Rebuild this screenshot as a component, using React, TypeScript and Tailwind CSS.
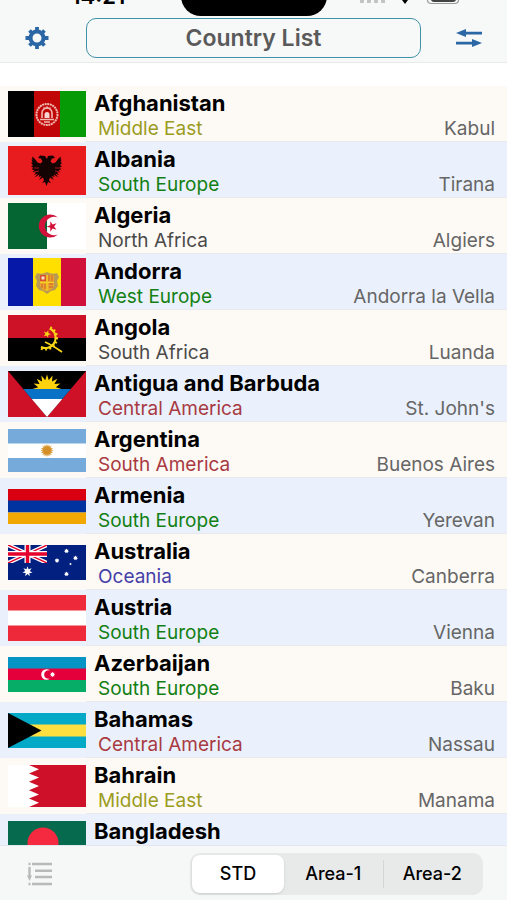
import { useState } from "react";
import type { ReactNode } from "react";

type Region =
    | "Middle East"
    | "South Europe"
    | "North Africa"
    | "West Europe"
    | "South Africa"
    | "Central America"
    | "South America"
    | "Oceania"
    | "South Asia";

interface Country {
    name: string;
    region: Region;
    capital: string;
    flagHeight: number;
    flag: ReactNode;
}

const regionColors: Record<Region, string> = {
    "Middle East": "text-[#9c9c1e]",
    "South Europe": "text-[#138013]",
    "North Africa": "text-[#4a4a4a]",
    "West Europe": "text-[#138013]",
    "South Africa": "text-[#4a4a4a]",
    "Central America": "text-[#a83a42]",
    "South America": "text-[#a83a42]",
    "Oceania": "text-[#4540a8]",
    "South Asia": "text-[#9c9c1e]",
};

const star = (cx: number, cy: number, outer: number, inner: number, points: number, turn = -90) =>
    Array.from({ length: points * 2 }, (_, i) => {
        const r = i % 2 === 0 ? outer : inner;
        const a = ((turn + (i * 180) / points) * Math.PI) / 180;
        return `${(cx + r * Math.cos(a)).toFixed(2)},${(cy + r * Math.sin(a)).toFixed(2)}`;
    }).join(" ");

const countries: Country[] = [
    {
        name: "Afghanistan",
        region: "Middle East",
        capital: "Kabul",
        flagHeight: 46,
        flag: (
            <>
                <rect width="26" height="46" fill="#000" />
                <rect x="26" width="26" height="46" fill="#c00606" />
                <rect x="52" width="26" height="46" fill="#069a06" />
                <g fill="none" stroke="#f0b8b0">
                    <circle cx="39" cy="23.5" r="10.5" strokeWidth="2" strokeDasharray="2 .6" />
                    <path d="M34 27v-5a5 5 0 0 1 10 0v5M32 28.500h14M36 31h6" strokeWidth="1.600" />
                    <path d="M39 15v3M35 17l8 0" strokeWidth="1" />
                </g>
                <path d="M36.500 27v-3.500a2.500 2.500 0 0 1 5 0V27z" fill="#f7d5d0" />
            </>
        ),
    },
    {
        name: "Albania",
        region: "South Europe",
        capital: "Tirana",
        flagHeight: 49,
        flag: (
            <>
                <rect width="78" height="49" fill="#e81c1e" />
                <path
                    d="M39 13l-2-3-5-.5-2 2.500 3 .5 1.500 3-2 2-3-1-3-4-2.500-2 .5 3-1 0 1 3-1.500 0 2 3-2 .5 2.500 2-2 1 3 1.500-2 1.500 3.500.5-2 2.500 4-1.500-3.500 4 5-3-1 2.500 3-1-2.500 4 4-2.500 1 3-2 2.500 3-1 1.500 4 1.500-4 3 1-2-2.500 1-3 4 2.500-2.500-4 3 1-1-2.500 5 3-3.500-4 4 1.500-2-2.500 3.500-.5-2-1.500 3-1.500-2-1 2.500-2-2-.5 2-3-1.500 0 1-3-1 0 .5-3-2.500 2-3 4-3 1-2-2 1.500-3 3-.5-2-2.500-5 .5z"
                    fill="#140303"
                />
                <path d="M31 22l-5 0M31 25l-5 1M47 22l5 0M47 25l5 1" stroke="#e81c1e" strokeWidth=".7" />
            </>
        ),
    },
    {
        name: "Algeria",
        region: "North Africa",
        capital: "Algiers",
        flagHeight: 46,
        flag: (
            <>
                <rect width="78" height="46" fill="#fff" />
                <rect width="39" height="46" fill="#056634" />
                <path d="M50 14.500a11.500 11.500 0 1 0 0 17a9.300 9.300 0 1 1 0-17z" fill="#d21238" />
                <polygon points={star(44, 23.5, 5.5, 2.1, 5, 180)} fill="#d21238" />
            </>
        ),
    },
    {
        name: "Andorra",
        region: "West Europe",
        capital: "Andorra la Vella",
        flagHeight: 48,
        flag: (
            <>
                <rect width="26" height="48" fill="#0618a8" />
                <rect x="25" width="28" height="48" fill="#fedf00" />
                <rect x="53" width="25" height="48" fill="#d0103a" />
                <path
                    d="M29 15q5 2 10-1 5 3 10 1l2 4-2 4 1 5-3 4-4 1-4 3-4-3-4-1-3-4 1-5-2-4z"
                    fill="#b89a55"
                />
                <path d="M32 17h14v11q-2 5-7 5t-7-5z" fill="#e9a52c" />
                <path d="M32 17h6v6h-6z" fill="#d8502c" />
                <path d="M33.500 18.500h3v3h-3z" fill="#f5e0c8" />
                <path d="M41 17v6M44 17v6M34 26v4M37 26v5M41 26h4M41 29h4" stroke="#d8702c" strokeWidth="1.300" />
                <path d="M32 24.500h14M39 17v16" stroke="#f7d023" strokeWidth="1.200" />
            </>
        ),
    },
    {
        name: "Angola",
        region: "South Africa",
        capital: "Luanda",
        flagHeight: 46,
        flag: (
            <>
                <rect width="78" height="46" fill="#000" />
                <rect width="78" height="23" fill="#cd1126" />
                <path d="M42 13.500a10 10 0 1 1-9 18.500" fill="none" stroke="#f9d616" strokeWidth="2" />
                <path
                    d="M42 12.800a10.700 10.700 0 1 1-9.500 20"
                    fill="none"
                    stroke="#f9d616"
                    strokeWidth="3.500"
                    strokeDasharray="1.800 2.200"
                />
                <path d="M37 27q7 3 17 10" fill="none" stroke="#f9d616" strokeWidth="1.800" />
                <polygon points={star(39, 19, 4, 1.6, 5, -70)} fill="#f9d616" />
            </>
        ),
    },
    {
        name: "Antigua and Barbuda",
        region: "Central America",
        capital: "St. John's",
        flagHeight: 46,
        flag: (
            <>
                <rect width="78" height="46" fill="#cf1128" />
                <path d="M0 0h78L39 46z" fill="#000" />
                <polygon points={star(39, 18, 14.5, 9, 16)} fill="#fdd20f" />
                <path d="M15.200 18h47.600L54.300 28H23.700z" fill="#0a72c6" />
                <path d="M23.700 28h30.600L39 46z" fill="#fff" />
            </>
        ),
    },
    {
        name: "Argentina",
        region: "South America",
        capital: "Buenos Aires",
        flagHeight: 43,
        flag: (
            <>
                <rect width="78" height="43" fill="#75aadb" />
                <rect y="14.500" width="78" height="14.500" fill="#fff" />
                <polygon points={star(39, 21.5, 6.6, 4.6, 16)} fill="#dcaa55" />
                <circle cx="39" cy="21.500" r="4" fill="#d58f28" />
            </>
        ),
    },
    {
        name: "Armenia",
        region: "South Europe",
        capital: "Yerevan",
        flagHeight: 35,
        flag: (
            <>
                <rect width="78" height="12" fill="#d90012" />
                <rect y="11.500" width="78" height="12" fill="#0033a0" />
                <rect y="23.500" width="78" height="11.500" fill="#f2a800" />
            </>
        ),
    },
    {
        name: "Australia",
        region: "Oceania",
        capital: "Canberra",
        flagHeight: 35,
        flag: (
            <>
                <rect width="78" height="35" fill="#012080" />
                <svg width="39" height="18" viewBox="0 0 39 18">
                    <path d="M0 0l39 18M39 0L0 18" stroke="#fff" strokeWidth="4" />
                    <path d="M0 0l39 18M39 0L0 18" stroke="#e4002b" strokeWidth="1.400" />
                    <path d="M19.500 0v18M0 9h39" stroke="#fff" strokeWidth="6" />
                    <path d="M19.500 0v18M0 9h39" stroke="#e4002b" strokeWidth="3.400" />
                </svg>
                <polygon points={star(19.5, 26.5, 5.2, 2.4, 7)} fill="#fff" />
                <polygon points={star(58.5, 6, 2.5, 1.5, 7)} fill="#fff" />
                <polygon points={star(49, 15.5, 2.5, 1.5, 7)} fill="#fff" />
                <polygon points={star(67.5, 13, 2.5, 1.5, 7)} fill="#fff" />
                <polygon points={star(62.5, 19, 1.4, 0.7, 5)} fill="#fff" />
                <polygon points={star(58.5, 29, 2.5, 1.5, 7)} fill="#fff" />
            </>
        ),
    },
    {
        name: "Austria",
        region: "South Europe",
        capital: "Vienna",
        flagHeight: 46,
        flag: (
            <>
                <rect width="78" height="46" fill="#ee2a3a" />
                <rect y="15.500" width="78" height="15" fill="#fff" />
            </>
        ),
    },
    {
        name: "Azerbaijan",
        region: "South Europe",
        capital: "Baku",
        flagHeight: 35,
        flag: (
            <>
                <rect width="78" height="12" fill="#0594c4" />
                <rect y="11.500" width="78" height="12" fill="#e4003a" />
                <rect y="23" width="78" height="12" fill="#05ad66" />
                <path d="M42 13.500a5.300 5.300 0 1 0 0 8a4.300 4.300 0 1 1 0-8z" fill="#fff" />
                <polygon points={star(44.5, 17.5, 2.7, 1.6, 8)} fill="#fff" />
            </>
        ),
    },
    {
        name: "Bahamas",
        region: "Central America",
        capital: "Nassau",
        flagHeight: 35,
        flag: (
            <>
                <rect width="78" height="35" fill="#04a9c7" />
                <rect y="11.500" width="78" height="12" fill="#fedf40" />
                <path d="M0 0l33.500 17.500L0 35z" fill="#000" />
            </>
        ),
    },
    {
        name: "Bahrain",
        region: "Middle East",
        capital: "Manama",
        flagHeight: 42,
        flag: (
            <>
                <rect width="78" height="42" fill="#fff" />
                <path
                    d="M78 0H21l10 4.200-10 4.200 10 4.200-10 4.200 10 4.200-10 4.200 10 4.200-10 4.200 10 4.200L21 42h57z"
                    fill="#ce1128"
                />
            </>
        ),
    },
    {
        name: "Bangladesh",
        region: "South Asia",
        capital: "Dhaka",
        flagHeight: 42,
        flag: (
            <>
                <rect width="78" height="42" fill="#056a4e" />
                <circle cx="35" cy="22" r="15.500" fill="#f52a41" />
            </>
        ),
    },
];

const GearIcon = () => (
    <svg width="24" height="24" viewBox="0 0 24 24" aria-hidden="true">
        <circle cx="12" cy="12" r="6.500" fill="none" stroke="#2b66a5" strokeWidth="4" />
        <path
            d="M12 1v4M12 19v4M.5 12h4M19.500 12h4M4.500 4.500L7 7M17 17l2.500 2.500M19.500 4.500L17 7M7 17l-2.500 2.500"
            stroke="#2b66a5"
            strokeWidth="3.800"
            strokeLinejoin="round"
        />
    </svg>
);

const SwapIcon = () => (
    <svg width="26" height="20" viewBox="0 0 26 20" fill="#2b66a5" aria-hidden="true">
        <path d="M0 5L10 1v2.700h16v2.800H10V9z" />
        <path d="M26 15l-10-4v2.700H0v2.800h16V19z" />
    </svg>
);

const SortListIcon = () => (
    <svg width="26" height="24" viewBox="0 0 26 24" fill="none" stroke="#b9b9b9" strokeWidth="2.400" aria-hidden="true">
        <path d="M5 2h20M8 8.700h17M8 15h17M5 22h20M1.500 2h2M1.500 22h2" />
        <path d="M2.500 5v10" />
        <path d="M0 13.500h5L2.500 19z" fill="#b9b9b9" stroke="none" />
    </svg>
);

// Only the lower edge of the status bar is visible above the navigation bar
const StatusBar = () => (
    <div className="grid h-4 grid-cols-[1fr_146px_1fr] overflow-hidden">
        <div className="-mt-5 pl-4 text-center text-[22px] leading-8 font-semibold text-black">14:21</div>
        <div className="-mt-6 h-10 rounded-[20px] bg-black" />
        <svg className="ml-8 h-4 w-[110px]" viewBox="0 0 110 16" aria-hidden="true">
            <path d="M1 0h4v3H1zM8 0h4v3H8zM15 0h4v3h-4zM22 0h4v3h-4z" fill="#c4c4c4" />
            <path d="M43 0h6l-3 4z" fill="#000" />
            <path d="M68.500-6v6q0 3.500 4 3.500h23q4 0 4-3.500v-6" fill="none" stroke="#999" strokeWidth="1.200" />
            <path d="M72 0h25q-.5 2-3 2H75q-2.500 0-3-2z" fill="#444" />
        </svg>
    </div>
);

const CountryRow = ({ country }: { country: Country }) => (
    <li className="flex h-14 bg-[#eaf1fc] pl-2 odd:bg-[#fdf9f5]">
        <div className="flex w-[78px] shrink-0 items-center">
            <svg
                width="78"
                height={country.flagHeight}
                viewBox={`0 0 78 ${country.flagHeight}`}
                role="img"
                aria-label={`Flag of ${country.name}`}
            >
                {country.flag}
            </svg>
        </div>
        <div className="min-w-0 flex-1 border-b border-[#e8e9ec] pt-1 pr-3 pl-2">
            <h2 className="truncate text-[22px] leading-[26px] font-bold text-black">{country.name}</h2>
            <div className="flex justify-between pl-1 text-[19px] leading-[26px]">
                <span className={regionColors[country.region]}>{country.region}</span>
                <span className="text-[#666]">{country.capital}</span>
            </div>
        </div>
    </li>
);

const tabs = ["STD", "Area-1", "Area-2"];

export default function App() {
    const [active, setActive] = useState("STD");

    return (
        <div className="flex h-screen flex-col overflow-hidden bg-white font-['Inter',sans-serif]">
            <header className="shrink-0 border-b border-[#e9eaea] bg-[#f7f8f8]">
                <StatusBar />
                <div className="flex items-center justify-between pt-0.5 pr-[25px] pb-1 pl-[25px]">
                    <button type="button" aria-label="Settings">
                        <GearIcon />
                    </button>
                    <button
                        type="button"
                        className="mr-[35px] ml-[37px] h-10 flex-1 rounded-[10px] border border-[#3f93a5] text-[23px] leading-7 font-semibold text-[#5a5a5a]"
                    >
                        Country List
                    </button>
                    <button type="button" aria-label="Swap">
                        <SwapIcon />
                    </button>
                </div>
            </header>

            <main className="min-h-0 flex-1 overflow-y-auto pt-[23px] [scrollbar-width:none]">
                <ul>
                    {countries.map((country) => (
                        <CountryRow key={country.name} country={country} />
                    ))}
                </ul>
            </main>

            <footer className="flex h-[55px] shrink-0 items-center justify-between border-t border-[#e4e8ee] bg-[#f6f7f7] pt-0.5 pr-6 pl-[27px]">
                <button type="button" aria-label="Sort list">
                    <SortListIcon />
                </button>
                <div className="grid h-[42px] w-[293px] grid-cols-[92px_1fr_1fr] items-center rounded-[10px] bg-[#e8e9e9] p-0.5">
                    {tabs.map((tab) => (
                        <button
                            key={tab}
                            type="button"
                            aria-pressed={active === tab}
                            onClick={() => setActive(tab)}
                            className={
                                active === tab
                                    ? "h-[38px] rounded-lg bg-white text-lg font-medium text-black shadow"
                                    : "h-7 border-[#d4d5d5] text-lg font-medium text-black last:border-l"
                            }
                        >
                            {tab}
                        </button>
                    ))}
                </div>
            </footer>
        </div>
    );
}
